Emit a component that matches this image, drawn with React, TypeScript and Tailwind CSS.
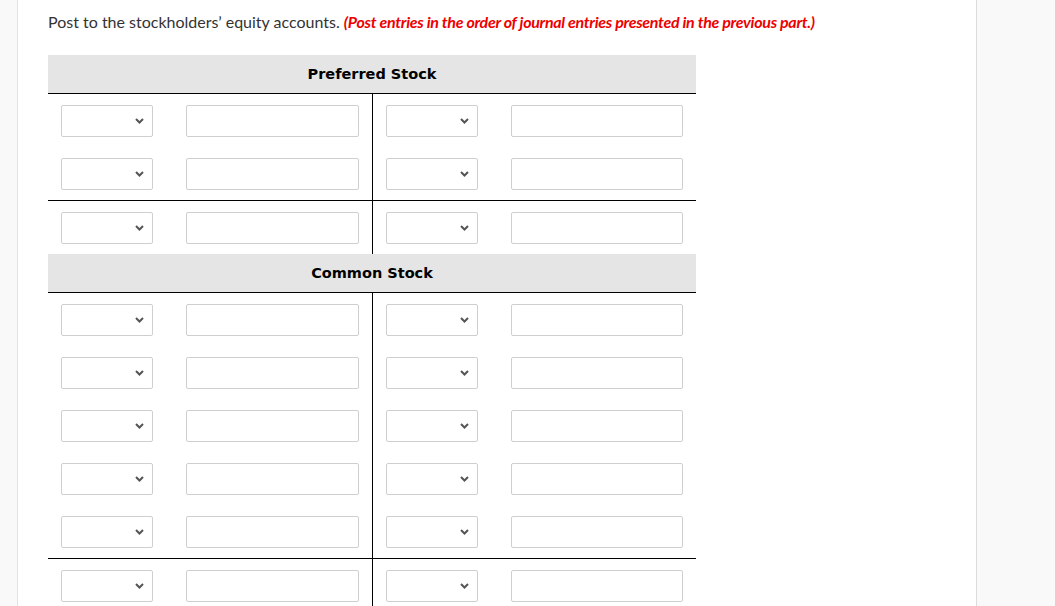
import React from "react";

function Chevron() {
  return (
    <svg width="9" height="6" viewBox="0 0 9 6" className="absolute right-[8px] top-1/2 -translate-y-1/2">
      <path d="M1 1 L4.5 4.5 L8 1" fill="none" stroke="#555" strokeWidth="2" />
    </svg>
  );
}

function Cell() {
  return (
    <div className="flex items-center h-full px-[13px] gap-[33px]">
      <div className="relative w-[92px] h-[32px] border border-[#cfcfcf] rounded-[2px] bg-white">
        <Chevron />
      </div>
      <div className="w-[173px] h-[32px] border border-[#cfcfcf] rounded-[2px] bg-white" />
    </div>
  );
}

function Row({ border }: { border?: boolean }) {
  return (
    <div className={`grid grid-cols-[324px_324px] ${border ? "h-[54px] border-b border-black" : "h-[53px]"}`}>
      <Cell />
      <div className="border-l border-black">
        <Cell />
      </div>
    </div>
  );
}

function Header({ title }: { title: string }) {
  return (
    <div className="h-[39px] pt-[2px] bg-[#e5e5e5] border-b border-black flex items-center justify-center">
      <span className="text-[14.5px] font-bold text-black" style={{ fontFamily: "'DejaVu Sans', Verdana, sans-serif" }}>{title}</span>
    </div>
  );
}

export default function App() {
  return (
    <div className="w-[1055px] h-[606px] overflow-hidden flex bg-[#f9f9f9]" style={{ fontFamily: "Lato, 'Open Sans', sans-serif" }}>
      <div className="w-[18px] shrink-0 border-r border-[#e3e3e3] bg-[#f9f9f9]" />
      <div className="w-[959px] shrink-0 bg-white border-r border-[#dcdcdc] pl-[30px] pt-[12px]">
        <p className="text-[16px] text-[#333] leading-[20px]">
          Post to the stockholders’ equity accounts.{" "}
          <span className="text-[#e00] font-bold italic tracking-[-0.3px]">(Post entries in the order of journal entries presented in the previous part.)</span>
        </p>
        <div className="mt-[23px] w-[648px]">
          <Header title="Preferred Stock" />
          <Row />
          <Row border />
          <Row />
          <Header title="Common Stock" />
          <Row />
          <Row />
          <Row />
          <Row />
          <Row border />
          <Row />
        </div>
      </div>
      <div className="flex-1 bg-[#f9f9f9]" />
    </div>
  );
}
